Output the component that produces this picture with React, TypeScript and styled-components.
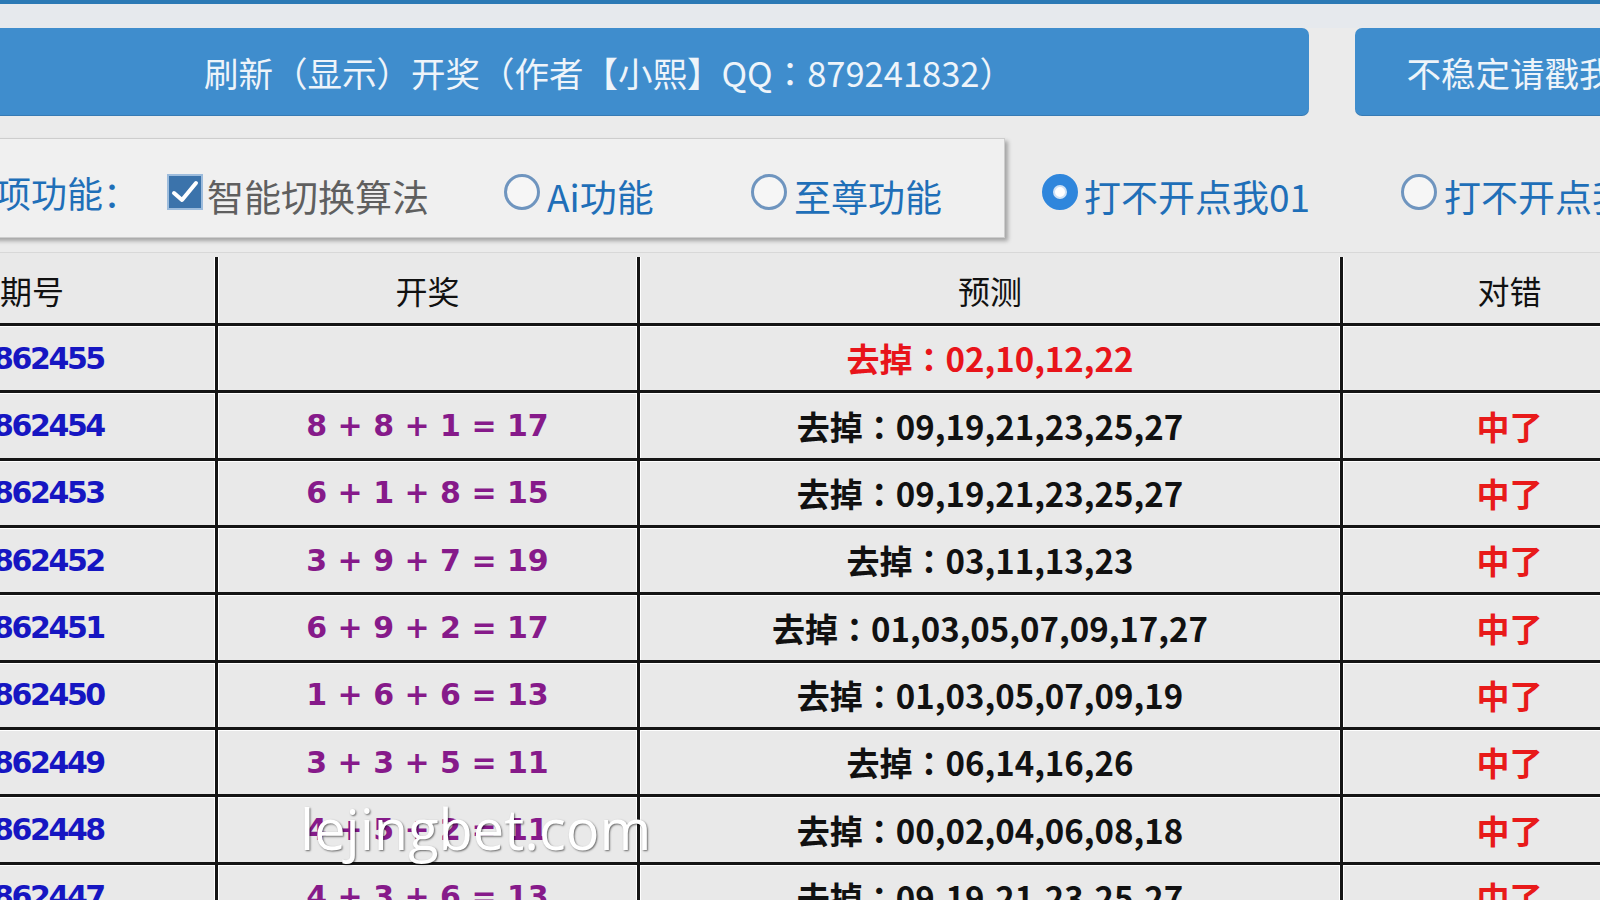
import React from "react";
import styled, { createGlobalStyle } from "styled-components";

const GlobalStyle = createGlobalStyle`
  html, body { margin: 0; padding: 0; background: #ebebeb; overflow: hidden; }
  #root { width: 1600px; height: 900px; }
`;

const CJK = `"Noto Sans CJK SC", "Noto Sans", sans-serif`;
const CJK_TC = `"Noto Sans CJK TC", "Noto Sans CJK SC", "Noto Sans", sans-serif`;

const Viewport = styled.div`
  position: relative;
  width: 1600px;
  height: 900px;
  overflow: hidden;
  background: #ebebeb;
  font-family: ${CJK};
`;

const Canvas = styled.div`
  margin-left: -150px;
  width: 1900px;
  display: flex;
  flex-direction: column;
`;

const TopLine = styled.div`
  height: 4px;
  background: #2b79b5;
`;

const ButtonRow = styled.div`
  display: flex;
  gap: 46px;
  padding: 24px 0 0 41px;
  background: linear-gradient(#e6e9ed 0, #e6e9ed 24px, #ebebeb 24px);
`;

const BlueButton = styled.button<{ $width: number; $shift?: number }>`
  width: ${(p) => p.$width}px;
  height: 88px;
  flex-shrink: 0;
  border: none;
  border-radius: 7px;
  background: #3f8dcd;
  color: #eef4fa;
  font: 400 34.5px ${CJK_TC};
  display: flex;
  align-items: center;
  justify-content: center;
  padding: 0 0 0 ${(p) => p.$shift ?? 0}px;
  white-space: nowrap;
  box-shadow: inset 0 -1px 0 rgba(0, 0, 0, 0.12);
`;

const OptionsRow = styled.div`
  display: flex;
  align-items: stretch;
  height: 100px;
  margin-top: 22px;
`;

const OptionsPanel = styled.div`
  width: 1155px;
  flex-shrink: 0;
  box-sizing: border-box;
  display: flex;
  align-items: center;
  padding: 8px 0 0 108px;
  background: #f0f0f0;
  border: 1px solid #cdcdcd;
  box-shadow: 3px 3px 4px rgba(0, 0, 0, 0.3);
`;

const OutsideOptions = styled.div`
  display: flex;
  align-items: center;
  padding: 8px 0 0 37px;
`;

const PanelLabel = styled.span`
  width: 208px;
  flex-shrink: 0;
  font: 400 36px ${CJK};
  color: #1f6fb8;
  white-space: nowrap;
`;

const Option = styled.label<{ $width: number; $gap: number; $muted?: boolean }>`
  width: ${(p) => p.$width}px;
  flex-shrink: 0;
  display: flex;
  align-items: center;
  gap: ${(p) => p.$gap}px;
  font: 400 37px ${CJK};
  color: ${(p) => (p.$muted ? "#5f5f5f" : "#1f6fb8")};
  white-space: nowrap;
`;

const OptionText = styled.span`
  margin-top: 8px;
`;

const CheckBox = styled.span`
  width: 36px;
  height: 36px;
  box-sizing: border-box;
  border: 2px solid #9dbcdc;
  background: #3b73ab;
  display: flex;
  align-items: center;
  justify-content: center;
  flex-shrink: 0;
`;

const RadioCircle = styled.span<{ $on?: boolean }>`
  width: 36px;
  height: 36px;
  box-sizing: border-box;
  border-radius: 50%;
  flex-shrink: 0;
  border: 3px solid ${(p) => (p.$on ? "#2f86dc" : "#6f95bf")};
  background: ${(p) => (p.$on ? "#2f86dc" : "#f6f6f6")};
  display: flex;
  align-items: center;
  justify-content: center;
`;

const RadioDot = styled.span`
  width: 10px;
  height: 10px;
  border-radius: 50%;
  background: #ffffff;
  border: 2px solid #cfe2f6;
`;

const Table = styled.div`
  margin-top: 14px;
  display: flex;
  flex-direction: column;
  border-top: 1px solid #d8d8d8;
`;

const Row = styled.div<{ $header?: boolean }>`
  display: grid;
  grid-template-columns: 365px 422px 703px 336px;
  width: 1900px;
  height: ${(p) => (p.$header ? "70px" : "67.35px")};
  box-sizing: border-box;
  border-top: ${(p) => (p.$header ? "none" : "3px solid #151515")};
  box-shadow: ${(p) => (p.$header ? "none" : "inset 0 1px 0 #ffffff")};
  background: #e9e9e9;
`;

const Cell = styled.div<{ $first?: boolean; $align?: "left" | "center"; $head?: boolean }>`
  display: flex;
  align-items: center;
  justify-content: ${(p) => (p.$align === "left" ? "flex-start" : "center")};
  box-sizing: border-box;
  margin-top: ${(p) => (p.$head ? "4px" : "0")};
  border-left: ${(p) => (p.$first ? "none" : "3px solid #151515")};
  box-shadow: ${(p) => (p.$first ? "none" : "inset 1px 0 0 #ffffff, -1px 0 0 #ffffff")};
  white-space: nowrap;
  overflow: hidden;
`;

const HeaderText = styled.span<{ $pad?: number }>`
  font: 400 32px ${CJK};
  color: #111111;
  padding-left: ${(p) => p.$pad ?? 0}px;
`;

const PeriodText = styled.span`
  padding-left: 143px;
  font: 700 30px "DejaVu Sans", "Liberation Sans", sans-serif;
  letter-spacing: -2.4px;
  color: #1616c2;
`;

const DrawText = styled.span`
  font: 700 30px "DejaVu Sans", "Liberation Sans", sans-serif;
  color: #861a8a;
`;

const PredText = styled.span<{ $hot?: boolean }>`
  font: 700 33px ${CJK_TC};
  color: ${(p) => (p.$hot ? "#e8141a" : "#111111")};
`;

const ResultText = styled.span`
  font: 700 33px ${CJK};
  color: #e81a1a;
`;

const Watermark = styled.div`
  position: absolute;
  left: 300px;
  top: 800px;
  font: 400 56px "Open Sans", "Noto Sans", sans-serif;
  line-height: 1;
  color: #ffffff;
  text-shadow: 1px 1px 2px rgba(0, 0, 0, 0.55);
  pointer-events: none;
`;

type Rec = { period: string; draw: string; pred: string; result: string; hot?: boolean };

const rows: Rec[] = [
  { period: "862455", draw: "", pred: "去掉：02,10,12,22", result: "", hot: true },
  { period: "862454", draw: "8 + 8 + 1 = 17", pred: "去掉：09,19,21,23,25,27", result: "中了" },
  { period: "862453", draw: "6 + 1 + 8 = 15", pred: "去掉：09,19,21,23,25,27", result: "中了" },
  { period: "862452", draw: "3 + 9 + 7 = 19", pred: "去掉：03,11,13,23", result: "中了" },
  { period: "862451", draw: "6 + 9 + 2 = 17", pred: "去掉：01,03,05,07,09,17,27", result: "中了" },
  { period: "862450", draw: "1 + 6 + 6 = 13", pred: "去掉：01,03,05,07,09,19", result: "中了" },
  { period: "862449", draw: "3 + 3 + 5 = 11", pred: "去掉：06,14,16,26", result: "中了" },
  { period: "862448", draw: "4 + 5 + 2 = 11", pred: "去掉：00,02,04,06,08,18", result: "中了" },
  { period: "862447", draw: "4 + 3 + 6 = 13", pred: "去掉：09,19,21,23,25,27", result: "中了" },
];

const Check = () => (
  <svg width="28" height="24" viewBox="0 0 28 24">
    <path d="M3 13 L11 20 L25 3" fill="none" stroke="#ffffff" strokeWidth="4" strokeLinecap="round" strokeLinejoin="round" />
  </svg>
);

const Radio: React.FC<{ on?: boolean }> = ({ on }) => (
  <RadioCircle $on={on}>{on && <RadioDot />}</RadioCircle>
);

export default function App() {
  return (
    <Viewport>
      <GlobalStyle />
      <Canvas>
        <TopLine />
        <ButtonRow>
          <BlueButton $width={1418} $shift={18}>刷新（显示）开奖（作者【小熙】QQ：879241832）</BlueButton>
          <BlueButton $width={310}>不稳定请戳我</BlueButton>
        </ButtonRow>
        <OptionsRow>
          <OptionsPanel>
            <PanelLabel>选项功能：</PanelLabel>
            <Option $width={337} $gap={4} $muted>
              <CheckBox>
                <Check />
              </CheckBox>
              <OptionText>智能切换算法</OptionText>
            </Option>
            <Option $width={247} $gap={7}>
              <Radio />
              <OptionText>Ai功能</OptionText>
            </Option>
            <Option $width={240} $gap={7}>
              <Radio />
              <OptionText>至尊功能</OptionText>
            </Option>
          </OptionsPanel>
          <OutsideOptions>
            <Option $width={359} $gap={6}>
              <Radio on />
              <OptionText>打不开点我01</OptionText>
            </Option>
            <Option $width={359} $gap={7}>
              <Radio />
              <OptionText>打不开点我02</OptionText>
            </Option>
          </OutsideOptions>
        </OptionsRow>
        <Table>
          <Row $header>
            <Cell $first $head $align="left">
              <HeaderText $pad={150}>期号</HeaderText>
            </Cell>
            <Cell $head>
              <HeaderText>开奖</HeaderText>
            </Cell>
            <Cell $head>
              <HeaderText>预测</HeaderText>
            </Cell>
            <Cell $head>
              <HeaderText>对错</HeaderText>
            </Cell>
          </Row>
          {rows.map((r) => (
            <Row key={r.period}>
              <Cell $first $align="left">
                <PeriodText>{r.period}</PeriodText>
              </Cell>
              <Cell>
                <DrawText>{r.draw}</DrawText>
              </Cell>
              <Cell>
                <PredText $hot={r.hot}>{r.pred}</PredText>
              </Cell>
              <Cell>
                <ResultText>{r.result}</ResultText>
              </Cell>
            </Row>
          ))}
        </Table>
      </Canvas>
      <Watermark>lejingbet.com</Watermark>
    </Viewport>
  );
}
